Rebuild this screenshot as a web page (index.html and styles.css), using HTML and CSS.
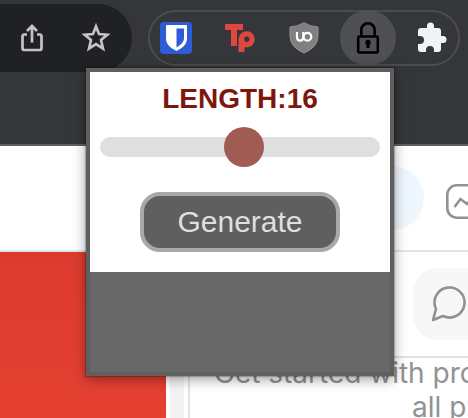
FILE: index.html
```html
<!DOCTYPE html>
<html lang="en">
<head>
<meta charset="utf-8">
<title>Password Generator</title>
<link rel="stylesheet" href="styles.css">
</head>
<body>
<header class="toolbar">
  <div class="omnibox">
    <svg class="icon" viewBox="0 0 32 32"><path d="M11 12.500H8.500Q6.500 12.500 6.500 14.500V26Q6.500 28 8.500 28H23.500Q25.500 28 25.500 26V14.500Q25.500 12.500 23.500 12.500H21M16 20.500V4M11 9L16 4L21 9"/></svg>
    <svg class="icon" viewBox="0 0 32 32"><path d="M16 4.500L19 12L27.300 12.700L21 18L23 26.500L16 22L9 26.500L11 18L4.700 12.700L13 12Z"/></svg>
  </div>
  <div class="extensions">
    <svg class="ext" viewBox="0 0 32 32"><rect width="32" height="32" rx="4" fill="#2d5cd6"/><path fill="#fff" d="M6 4Q6 3 7 3H26Q27 3 27 4V16C27 23 22 26 16.500 29C11 26 6 23 6 16Z"/><path fill="#2d5cd6" d="M16.500 6.500H24V16C24 20.500 20.500 23 16.500 25.500Z"/></svg>
    <svg class="ext" viewBox="0 0 32 32"><path fill="#de483e" d="M1 2H19V8H13V24H7V8H1Z"/><circle cx="22.700" cy="17.300" r="5.400" fill="none" stroke="#35363a" stroke-width="7.600"/><path fill="#de483e" d="M1 2H19V8H13V24H7V8H1ZM14.500 17H20.500V30H14.500Z"/><circle cx="22.700" cy="17.300" r="5.400" fill="none" stroke="#de483e" stroke-width="5.400"/></svg>
    <svg class="ext" viewBox="0 0 32 32"><path fill="#808080" stroke="#969696" d="M16 .7Q22 4.500 30 5V14Q30 25 16 31Q2 25 2 14V5Q10 4.500 16 .7Z"/><path fill="none" stroke="#fff" stroke-width="2.200" d="M9 10V15Q9 18.700 12 18.700Q15.300 18.700 15.300 15V10"/><circle cx="19.400" cy="14.800" r="3.900" fill="none" stroke="#fff" stroke-width="2.200"/></svg>
    <span class="active"><svg class="ext" viewBox="0 0 32 32"><rect x="6.200" y="14.500" width="19.600" height="16" rx="1.500" fill="none" stroke="#000" stroke-width="2.600"/><path fill="none" stroke="#000" stroke-width="2.600" d="M9.300 14V8A6.700 6.700 0 0 1 22.700 8V14"/><circle cx="16" cy="20.500" r="2.700"/><path d="M14.500 21H17.500V26H14.500Z"/></svg></span>
    <svg class="ext" viewBox="0 0 32 32"><path fill="#f1f3f4" d="M2 9Q2 6 5 6H11V4A3.500 3.500 0 0 1 18 4V6H22Q25 6 25 9V14H27A3.500 3.500 0 0 1 27 21H25V27Q25 30 22 30H18V28A4 4 0 0 0 10 28V30H5Q2 30 2 27V22H4A4 4 0 0 0 4 14H2Z"/></svg>
  </div>
</header>
<main class="page">
  <section class="topbar">
    <span class="glow"></span>
    <svg class="activity" viewBox="0 0 34 36"><rect x="1.300" y="1.300" width="31.400" height="32.400" rx="9.500"/><path d="M8.500 23L14.500 15L21 20L27 13"/></svg>
  </section>
  <section class="columns">
    <div class="banner"></div>
    <div class="gutter"></div>
    <div class="feed">
      <div class="chat-row"><div class="chat"><svg viewBox="0 0 36 36"><path d="M2 34L5 23A15 15 0 1 1 12 30Q7 32 2 34Z"/></svg></div></div>
      <div class="promo"><p class="first">Get started with products</p><p class="second">all products</p></div>
    </div>
  </section>
</main>
<div class="popup">
  <div class="panel">
    <h1 class="length">LENGTH:16</h1>
    <div class="slider"><span class="thumb"></span></div>
    <button class="generate">Generate</button>
  </div>
</div>
</body>
</html>
```
FILE: styles.css
```css
* { box-sizing: border-box; }
body { margin: 0; width: 468px; height: 418px; overflow: hidden; position: relative; background: #fff; font-family: "Liberation Sans", sans-serif; }
svg { display: block; flex: none; }
.toolbar { display: flex; align-items: flex-start; gap: 16px; height: 146px; background: #35363a; border-bottom: 2px solid #5f5f63; }
.omnibox { display: flex; align-items: center; gap: 32px; width: 132px; height: 68px; margin-top: 4px; padding-left: 16px; background: #202124; border-radius: 0 34px 34px 0; }
.icon { width: 32px; height: 32px; fill: none; stroke: #c4c4c6; stroke-width: 2.7; }
.extensions { display: flex; align-items: center; gap: 32px; width: 312px; height: 56px; margin-top: 10px; padding-left: 10px; border: 2px solid #4b4c50; border-radius: 28px; }
.ext { width: 32px; height: 32px; }
.active { display: flex; align-items: center; justify-content: center; flex: none; width: 56px; height: 56px; margin: 0 -12px; border-radius: 50%; background: #4f5054; }
.page { height: 272px; overflow: hidden; }
.topbar { display: flex; align-items: center; justify-content: flex-end; gap: 22px; height: 106px; border-bottom: 2px solid #e2e4e5; margin-right: -12px; }
.glow { width: 64px; height: 64px; border-radius: 50%; background: #eff7fe; }
.activity { width: 34px; height: 36px; margin-top: 8px; fill: none; stroke: #929292; stroke-width: 2.6; }
.columns { display: flex; height: 166px; }
.banner { flex: none; width: 166px; background: linear-gradient(#dd3b2f, #e44132); }
.gutter { flex: none; width: 22px; border: solid #fff; border-width: 0 4px; background: #f3f3f3; }
.feed { flex: 1; min-width: 0; border-left: 2px solid #e2e2e2; }
.chat-row { height: 106px; padding: 16px 0 0 223px; border-bottom: 2px solid #e2e2e2; }
.chat { width: 90px; height: 72px; padding: 18px 0 0 18px; border-radius: 24px; background: #f7f7f7; }
.chat svg { width: 36px; height: 36px; fill: none; stroke: #929292; stroke-width: 2.6; stroke-linejoin: round; }
.promo { margin-top: -2px; color: #929292; font: 28px/34px Inter, sans-serif; white-space: nowrap; }
.promo p { margin: 0; }
.first { padding-left: 24px; }
.second { padding-left: 222px; }
.popup { position: absolute; left: 86px; top: 68px; width: 308px; height: 308px; border: 4px solid #5f5f5f; background: #676767; box-shadow: 0 0 1px 1px #0003, 0 3px 12px #0006; }
.panel { display: flex; flex-direction: column; align-items: center; height: 200px; padding-top: 10px; background: #fff; }
.length { margin: 0; font-size: 28px; line-height: 34px; color: #7d170e; }
.slider { display: flex; align-items: center; justify-content: center; width: 280px; height: 20px; margin: 21px 0 35px; padding-left: 8px; border-radius: 10px; background: #dfdfdf; }
.thumb { flex: none; width: 40px; height: 40px; border-radius: 50%; background: #a05b53; }
.generate { width: 200px; height: 60px; padding: 0; border: 4px solid #a8a8a8; border-radius: 20px; background: #5f5f5f; color: #dfdfdf; font: 30px "Liberation Sans", sans-serif; }
```
